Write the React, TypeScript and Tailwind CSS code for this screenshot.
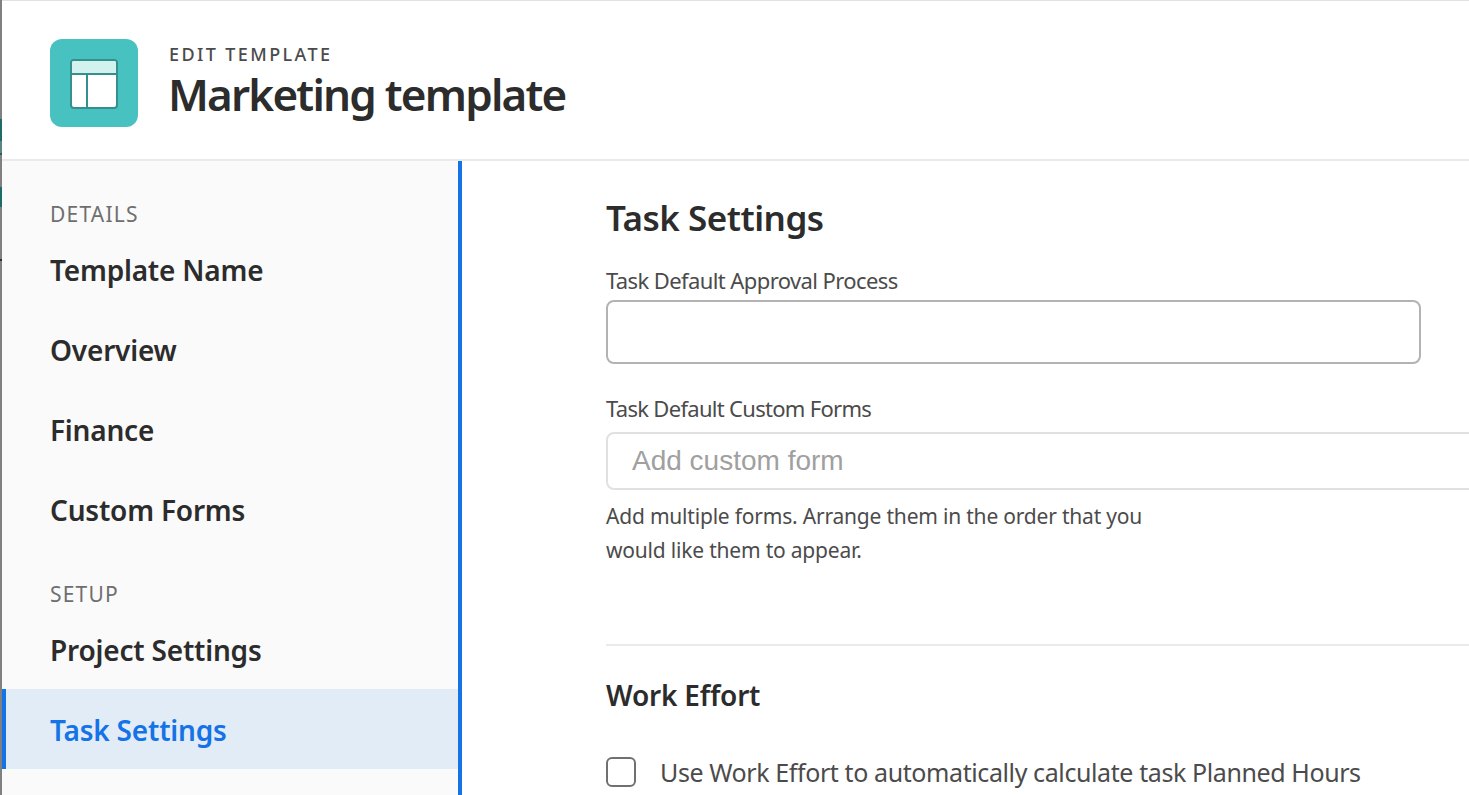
const font = { fontFamily: '"Noto Sans", sans-serif' };

function NavItem({ label, active }: { label: string; active?: boolean }) {
  return (
    <div className={active ? "h-20 flex items-center pt-[2px] pl-[44px] border-l-[4px] border-[#1473e6] bg-[#e2ecf7] text-[#1473e6] text-[28px] font-semibold" : "h-20 flex items-center pt-[2px] pl-12 text-[#2c2c2c] text-[28px] font-semibold"}>
      <span className="tracking-[-0.2px]">{label}</span>
    </div>
  );
}

export default function App() {
  return (
    <div className="h-[795px] w-[1469px] overflow-hidden bg-white flex" style={font}>
      <div className="w-[2px] shrink-0 bg-[#808080] flex flex-col">
        <div className="h-[119px]" />
        <div className="h-[22px] bg-[#1f6b6b]" />
        <div className="h-[12px] bg-[#5d8585]" />
        <div className="h-[2px] bg-[#1f5f5f]" />
        <div className="h-[32px]" />
        <div className="h-[20px] bg-[#1f6b6b]" />
        <div className="h-[52px]" />
        <div className="h-[2px] bg-[#3a3020]" />
      </div>
      <div className="flex-1 min-w-0 flex flex-col border-t border-[#e1e1e1]">
        <header className="h-[160px] shrink-0 border-b-2 border-[#eaeaea] flex items-start pl-12 pt-[38px]">
          <div className="w-[88px] h-[88px] rounded-[12px] bg-[#48c2c0] flex items-center justify-center mr-[30px] pt-[2px]">
            <svg width="48" height="50" viewBox="0 0 48 50" fill="none">
              <rect x="1" y="1" width="46" height="48" rx="3" fill="#fff" stroke="#358f8d" strokeWidth="2" />
              <path d="M2 4a2 2 0 0 1 2-2h40a2 2 0 0 1 2 2v10H2z" fill="#d2f2f0" />
              <path d="M1 15h46M17 15v34" stroke="#358f8d" strokeWidth="2" />
            </svg>
          </div>
          <div className="flex flex-col pt-[6px]">
            <div className="text-[18px] leading-[19px] tracking-[2.4px] text-[#4b4b4b] font-medium pl-[1px]">EDIT TEMPLATE</div>
            <div className="text-[44px] leading-[60px] font-semibold text-[#2c2c2c] tracking-[-1.8px]">Marketing template</div>
          </div>
        </header>
        <div className="flex-1 min-h-0 flex">
          <aside className="w-[460px] shrink-0 bg-[#fafafa] border-r-[4px] border-[#1473e6] pt-[40px]">
            <div className="text-[21px] leading-[26px] tracking-[1.2px] text-[#6e6e6e] pl-12 h-[28px]">DETAILS</div>
            <div>
              <NavItem label="Template Name" />
              <NavItem label="Overview" />
              <NavItem label="Finance" />
              <NavItem label="Custom Forms" />
            </div>
            <div className="text-[21px] leading-[26px] tracking-[1.2px] text-[#6e6e6e] pl-12 h-[28px] mt-[32px]">SETUP</div>
            <div>
              <NavItem label="Project Settings" />
              <NavItem label="Task Settings" active />
            </div>
          </aside>
          <main className="flex-1 min-w-0 pl-[144px] pt-[33px] overflow-hidden">
            <h1 className="text-[35px] leading-[48px] font-semibold text-[#2c2c2c] tracking-[-0.5px]">Task Settings</h1>
            <label className="block mt-[23px] text-[22px] leading-[30px] text-[#4b4b4b] tracking-[-0.6px]">Task Default Approval Process</label>
            <div className="mt-[5px] w-[815px] h-[64px] rounded-[8px] border-2 border-[#b3b3b3] bg-white" />
            <label className="block mt-[29px] text-[22px] leading-[30px] text-[#4b4b4b] tracking-[-0.7px]">Task Default Custom Forms</label>
            <div className="mt-[9px] w-[1000px] h-[58px] rounded-[8px] border-2 border-[#e1e1e1] bg-white flex items-center pl-[24px]">
              <span className="text-[28px] text-[#a0a0a0]" style={{ fontFamily: '"Liberation Sans", sans-serif' }}>Add custom form</span>
            </div>
            <p className="mt-[9px] text-[21px] leading-[34px] text-[#4b4b4b] tracking-[-0.2px] w-[560px]">Add multiple forms. Arrange them in the order that you would like them to appear.</p>
            <div className="mt-[77px] h-[2px] bg-[#eaeaea]" />
            <h2 className="mt-[29px] text-[28px] leading-[40px] font-semibold text-[#2c2c2c] tracking-[-0.2px]">Work Effort</h2>
            <div className="mt-[41px] flex items-center">
              <div className="w-[30px] h-[30px] rounded-[6px] border-2 border-[#707070] bg-white mr-[24px]" />
              <span className="text-[25px] leading-[32px] text-[#4b4b4b] tracking-[-0.4px]">Use Work Effort to automatically calculate task Planned Hours</span>
            </div>
          </main>
        </div>
      </div>
    </div>
  );
}
